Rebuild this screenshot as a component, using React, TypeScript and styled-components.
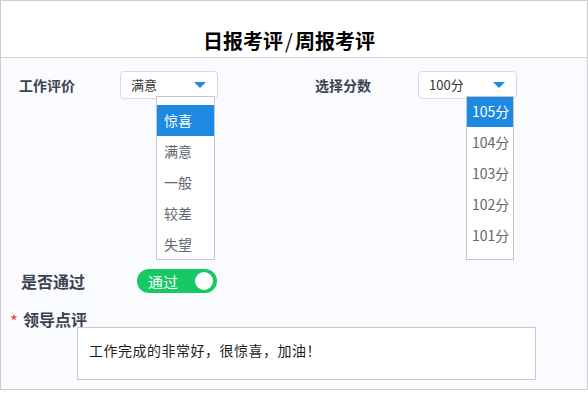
import React from "react";
import styled, { createGlobalStyle } from "styled-components";

const ratingOptions = ["惊喜", "满意", "一般", "较差", "失望"];
const scoreOptions = ["105分", "104分", "103分", "102分", "101分"];

const GlobalStyle = createGlobalStyle`
  html, body {
    margin: 0;
    padding: 0;
    background: #ffffff;
  }
  body {
    font-family: "Noto Sans CJK SC", "Noto Sans", sans-serif;
  }
`;

interface DropdownProps {
  items: string[];
  active: number;
  offset: number;
  width: number;
  pad: number;
  padTop: number;
  scroll: number;
}

function Dropdown({ items, active, offset, width, pad, padTop, scroll }: DropdownProps) {
  return (
    <StList $offset={offset} $width={width} $padTop={padTop}>
      <StListInner $scroll={scroll}>
        {items.map((item, i) => (
          <StItem key={item} $active={i === active} $pad={pad}>
            {item}
          </StItem>
        ))}
      </StListInner>
    </StList>
  );
}

function App() {
  return (
    <>
      <GlobalStyle />
      <StFrame>
        <StHeader>
          <StTitle>
            日报考评<StSlash>/</StSlash>周报考评
          </StTitle>
        </StHeader>
        <StBody>
          <StSelectRow>
            <StField>
              <StLabel $size={14} $width={101} $left={18}>
                工作评价
              </StLabel>
              <StSelectColumn>
                <StSelect $width={98}>
                  <span>满意</span>
                  <StArrow />
                </StSelect>
                <Dropdown
                  items={ratingOptions}
                  active={0}
                  offset={36}
                  width={59}
                  pad={7}
                  padTop={8}
                  scroll={0}
                />
              </StSelectColumn>
            </StField>
            <StField>
              <StLabel $size={14} $width={103} $left={97}>
                选择分数
              </StLabel>
              <StSelectColumn>
                <StSelect $width={99}>
                  <span>100分</span>
                  <StArrow />
                </StSelect>
                <Dropdown
                  items={scoreOptions}
                  active={0}
                  offset={48}
                  width={48}
                  pad={5}
                  padTop={0}
                  scroll={1}
                />
              </StSelectColumn>
            </StField>
          </StSelectRow>

          <StSwitchRow>
            <StLabel $size={16} $width={116} $left={20}>
              是否通过
            </StLabel>
            <StSwitch>
              <span>通过</span>
              <StKnob />
            </StSwitch>
          </StSwitchRow>

          <StCommentLabel>
            <StStar>*</StStar>
            领导点评
          </StCommentLabel>
          <StTextBox>工作完成的非常好，很惊喜，加油！</StTextBox>
        </StBody>
      </StFrame>
    </>
  );
}

const StFrame = styled.div`
  box-sizing: border-box;
  width: 588px;
  height: 390px;
  border: 1px solid #cccccc;
  display: flex;
  flex-direction: column;
  overflow: hidden;
`;

const StHeader = styled.div`
  height: 52px;
  padding-bottom: 4px;
  background: #ffffff;
  border-bottom: 1px solid #cfcfcf;
  display: flex;
  align-items: flex-end;
  justify-content: center;
`;

const StTitle = styled.h1`
  margin: 0 10px 0 0;
  font-size: 20px;
  line-height: 24px;
  font-weight: 700;
  color: #000000;
`;

const StSlash = styled.span`
  font-weight: 400;
  margin: 0 2px;
`;

const StBody = styled.div`
  flex: 1;
  background: #f9fbfe;
  padding-top: 13px;
  display: flex;
  flex-direction: column;
`;

const StSelectRow = styled.div`
  display: flex;
  align-items: flex-start;
`;

const StField = styled.div`
  display: flex;
  align-items: flex-start;
`;

const StLabel = styled.div<{ $size: number; $width: number; $left: number }>`
  box-sizing: border-box;
  margin-left: ${(p) => p.$left}px;
  width: ${(p) => p.$width}px;
  font-size: ${(p) => p.$size}px;
  line-height: ${(p) => (p.$size === 14 ? 28 : 24)}px;
  font-weight: 700;
  color: #3c4350;
`;

const StSelectColumn = styled.div`
  display: flex;
  flex-direction: column;
`;

const StSelect = styled.div<{ $width: number }>`
  box-sizing: border-box;
  width: ${(p) => p.$width}px;
  height: 28px;
  padding: 0 11px 0 10px;
  background: #ffffff;
  border: 1px solid #d5dbe4;
  border-radius: 4px;
  display: flex;
  align-items: center;
  justify-content: space-between;
  font-size: 13px;
  line-height: 26px;
  color: #333333;
`;

const StArrow = styled.span`
  width: 0;
  height: 0;
  border-left: 6px solid transparent;
  border-right: 6px solid transparent;
  border-top: 6px solid #1e88e5;
`;

const StList = styled.div<{ $offset: number; $width: number; $padTop: number }>`
  box-sizing: border-box;
  margin: -3px 0 0 ${(p) => p.$offset}px;
  width: ${(p) => p.$width}px;
  height: 164px;
  padding-top: ${(p) => p.$padTop}px;
  background: #ffffff;
  border: 1px solid #c4c7cc;
  overflow: hidden;
`;

const StListInner = styled.div<{ $scroll: number }>`
  margin-top: -${(p) => p.$scroll}px;
`;

const StItem = styled.div<{ $active: boolean; $pad: number }>`
  height: 31px;
  line-height: 31px;
  padding-left: ${(p) => p.$pad}px;
  font-size: 14px;
  white-space: nowrap;
  color: ${(p) => (p.$active ? "#ffffff" : "#5f6671")};
  background: ${(p) => (p.$active ? "#1e89e0" : "transparent")};
`;

const StSwitchRow = styled.div`
  display: flex;
  align-items: center;
  margin-top: 9px;
`;

const StSwitch = styled.div`
  box-sizing: border-box;
  width: 80px;
  height: 24px;
  border-radius: 12px;
  background: #17c964;
  padding: 0 4px 0 11px;
  display: flex;
  align-items: center;
  justify-content: space-between;
  font-size: 15px;
  color: #ffffff;
`;

const StKnob = styled.span`
  width: 18px;
  height: 18px;
  border-radius: 50%;
  background: #ffffff;
`;

const StCommentLabel = styled.div`
  margin: 18px 0 0 9px;
  height: 16px;
  display: flex;
  align-items: center;
  gap: 5px;
  font-size: 16px;
  line-height: 16px;
  font-weight: 700;
  color: #3c4350;
`;

const StStar = styled.span`
  font-size: 17px;
  line-height: 16px;
  font-weight: 400;
  color: #f24848;
  margin-top: 3px;
`;

const StTextBox = styled.div`
  box-sizing: border-box;
  margin-left: 76px;
  width: 459px;
  height: 53px;
  padding: 12px 11px;
  background: #ffffff;
  border: 1px solid #c8c8c8;
  font-size: 14px;
  line-height: 20px;
  letter-spacing: 0.5px;
  color: #1e1e1e;
`;

export default App;
